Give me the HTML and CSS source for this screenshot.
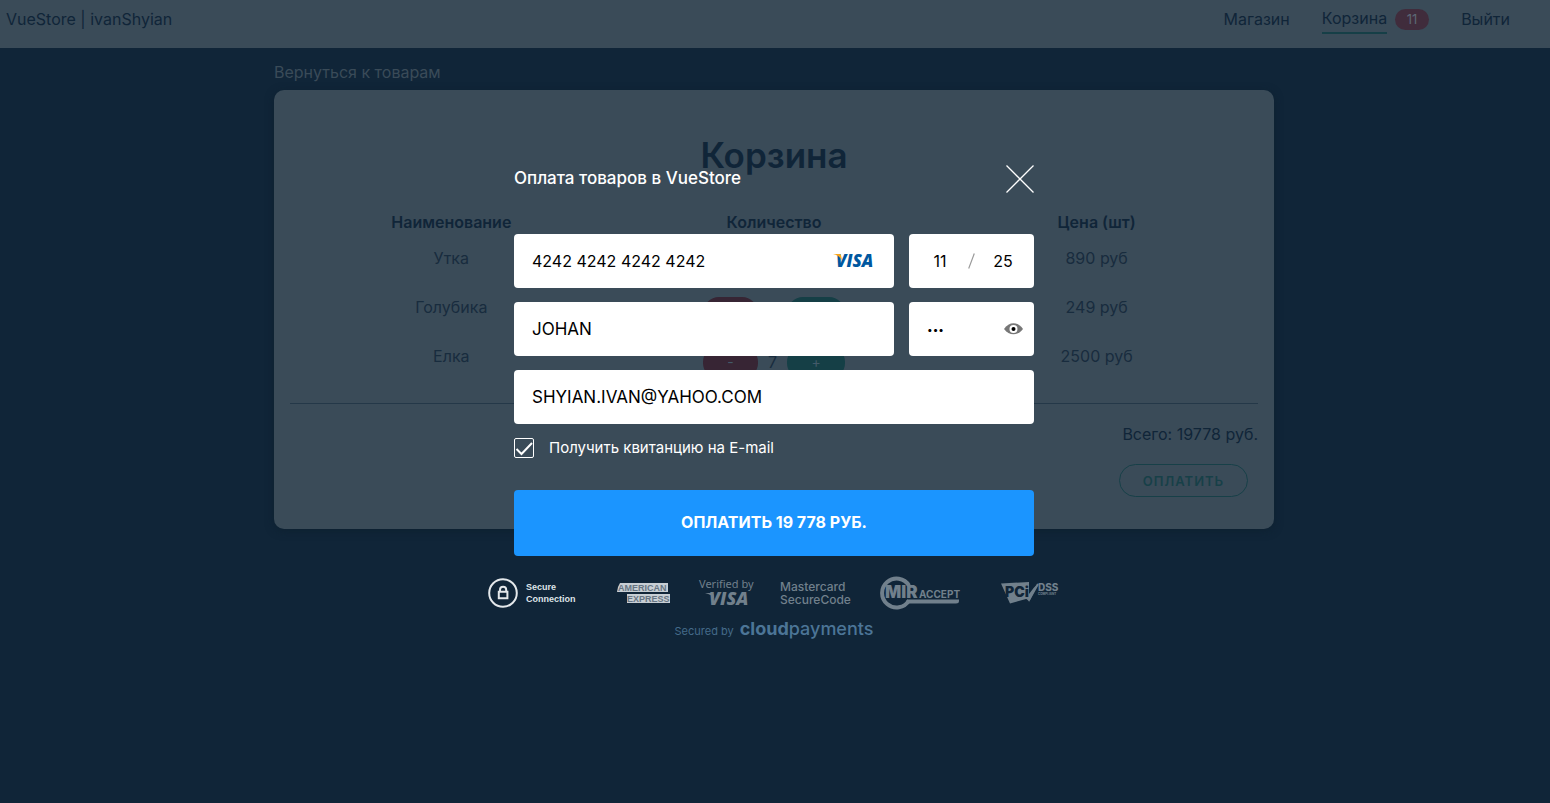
FILE: index.html
```html
<!DOCTYPE html>
<html lang="ru">
<head>
<meta charset="utf-8">
<title>VueStore</title>
<link rel="stylesheet" href="styles.css">
</head>
<body>
<header class="navbar">
  <span class="brand">VueStore | ivanShyian</span>
  <nav class="menu">
    <a href="#">Магазин</a>
    <span class="menu-cart"><a class="active" href="#">Корзина</a><span class="badge">11</span></span>
    <a href="#">Выйти</a>
  </nav>
</header>

<main class="page">
  <a class="back" href="#">Вернуться к товарам</a>
  <section class="card">
    <h1>Корзина</h1>
    <table class="cart">
      <thead><tr><th>Наименование</th><th>Количество</th><th>Цена (шт)</th></tr></thead>
      <tbody>
        <tr><td>Утка</td><td><div class="qty"><button class="minus">-</button><span>2</span><button class="plus">+</button></div></td><td>890 руб</td></tr>
        <tr><td>Голубика</td><td><div class="qty"><button class="minus">-</button><span>2</span><button class="plus">+</button></div></td><td>249 руб</td></tr>
        <tr><td>Елка</td><td><div class="qty"><button class="minus">-</button><span>7</span><button class="plus">+</button></div></td><td>2500 руб</td></tr>
      </tbody>
    </table>
    <hr>
    <p class="total">Всего: 19778 руб.</p>
    <div class="actions"><button class="checkout">ОПЛАТИТЬ</button></div>
  </section>
</main>

<div class="overlay">
  <form class="modal">
    <div class="modal-head">
      <h2>Оплата товаров в VueStore</h2>
      <button type="button" class="close" aria-label="Закрыть">
        <svg width="28" height="28" viewBox="0 0 28 28" fill="none" stroke="#fff" stroke-width="1.3"><path d="M.5.5l27 27M27.5.5l-27 27"/></svg>
      </button>
    </div>
    <div class="fields">
      <div class="field">
        <input type="text" aria-label="Номер карты" value="4242 4242 4242 4242">
        <svg width="41" height="16" viewBox="0 0 41 16" role="img" aria-label="Visa">
          <text class="visa-word visa-blue" x="3" y="14">VISA</text>
          <path d="M0 1h6.200q1.600 0 1.900 1.400L9 7.500Q6.500 2.400 0 1z" fill="#faa61a"/>
        </svg>
      </div>
      <div class="field expiry">
        <input type="text" aria-label="Месяц" value="11">
        <svg width="7" height="16" viewBox="0 0 7 16" fill="none" stroke="#999" stroke-width="1.200"><path d="M6.300.5L.7 15.500"/></svg>
        <input type="text" aria-label="Год" value="25">
      </div>
      <div class="field letters"><input type="text" aria-label="Имя держателя" value="JOHAN"></div>
      <div class="field cvv">
        <input type="password" aria-label="CVV" value="123">
        <button type="button" class="eye" aria-label="Показать код">
          <svg width="19" height="12" viewBox="0 0 19 12"><path d="M0 6C5-1.800 14-1.800 19 6 14 13 5 13 0 6z" fill="#777"/><circle cx="9.500" cy="6" r="4" fill="#fff"/><circle cx="9.500" cy="6" r="2" fill="#000"/></svg>
        </button>
      </div>
      <div class="field letters wide"><input type="text" aria-label="E-mail" value="SHYIAN.IVAN@YAHOO.COM"></div>
    </div>
    <label class="receipt">
      <span class="check"><input type="checkbox" checked><svg width="20" height="20" viewBox="0 0 20 20" fill="none" stroke="#fff" stroke-width="2"><path d="M2.500 11l5 5L18 5"/></svg></span>
      <span>Получить квитанцию на E-mail</span>
    </label>
    <button type="button" class="pay">ОПЛАТИТЬ 19 778 РУБ.</button>
  </form>

  <div class="logos">
    <div class="secure">
      <svg width="30" height="30" viewBox="0 0 30 30" fill="none" stroke="#e4e8eb" stroke-width="2"><circle cx="15" cy="15" r="13.800"/><path d="M10.800 13.800h8.600v6.400h-8.600z"/><path d="M12 13.500v-1.700a3.100 3.100 0 0 1 6.200 0v1.700"/></svg>
      <span>Secure<br>Connection</span>
    </div>
    <svg class="set-apart" width="54" height="24" viewBox="0 0 54 24" role="img" aria-label="American Express">
      <path d="M3 2h48v9H0l1-5z" fill="#c7ced4"/><path d="M10 13h43v9H10z" fill="#c7ced4"/>
      <text class="amex" x="1" y="10">AMERICAN</text><text class="amex" x="10" y="21">EXPRESS</text>
    </svg>
    <svg width="53" height="34" viewBox="0 0 53 34" role="img" aria-label="Verified by Visa">
      <text class="verified" x="0" y="12">Verified by</text>
      <text class="visa-word visa-grey" x="10" y="29">VISA</text>
      <path d="M6 17h6.500q1.600 0 2 1.500l.8 4.500Q13 18.500 6 17z" fill="#71808c"/>
    </svg>
    <span class="securecode">Mastercard<br>SecureCode</span>
    <svg width="82" height="34" viewBox="0 0 82 34" role="img" aria-label="MIR Accept">
      <path d="M29 9.500A14.500 14.500 0 1 0 29 24.500" fill="none" stroke="#71808c" stroke-width="4"/>
      <path d="M27 23.500h52v1.500q0 2.500-3 2.500H25z" fill="#71808c"/>
      <text class="mir" x="5" y="22">MIR</text>
      <text class="accept" x="39" y="22">ACCEPT</text>
    </svg>
    <svg class="set-apart" width="59" height="24" viewBox="0 0 59 24" role="img" aria-label="PCI DSS Compliant">
      <path d="M0 2.500L28 1v12q4-6 9-10.500L29 19l-4-1-16 4.500z" fill="#71808c"/>
      <path d="M23 13l5 6L37 3" fill="none" stroke="#71808c" stroke-width="2"/>
      <text class="pci" x="4" y="16">PCi</text>
      <text class="dss" x="37" y="10">DSS</text>
      <text class="compliant" x="37" y="14">COMPLIANT</text>
    </svg>
  </div>
  <p class="secured">Secured by <span><b>cloud</b>payments</span></p>
</div>
</body>
</html>
```
FILE: styles.css
```css
* { box-sizing: border-box; }
body {
  margin: 0;
  min-height: 100vh;
  background: #102538;
  color: #102538;
  font: 16px/24px Inter, "Open Sans", sans-serif;
}
a { color: inherit; text-decoration: none; }
button, input { font: inherit; }
h1, h2, p { margin: 0; }
svg { overflow: visible; }

.navbar {
  display: flex;
  justify-content: space-between;
  height: 48px;
  padding: 7px 40px 0 6px;
  background: #3a4b58;
}
.menu { display: flex; gap: 32px; }
.menu-cart { display: flex; gap: 8px; align-items: flex-start; }
.active { padding-bottom: 2px; border-bottom: 2px solid #163f47; line-height: 23px; }
.badge {
  margin-top: 2px;
  width: 34px;
  border-radius: 11px;
  background: #402c3c;
  color: #5c6875;
  font-size: 13px;
  line-height: 21px;
  text-align: center;
}

.page { width: calc(100% - 2px); padding: 12px 0; }
.back, .card { max-width: 1000px; margin: 0 auto; }
.back { color: #3a4b58; display: block; margin-bottom: 6px; }
.card {
  padding: 41px 16px 32px;
  border-radius: 10px;
  background: #3a4b58;
  box-shadow: 0 2px 8px rgba(12, 30, 44, .6);
}
h1 { font-size: 35px; line-height: 48px; font-weight: 600; text-align: center; }
.cart {
  width: 100%;
  margin-top: 31px;
  border-collapse: collapse;
  table-layout: fixed;
  text-align: center;
}
.cart th { padding: 0 0 12px; font-weight: 600; }
.cart td { height: 49px; padding: 0; vertical-align: top; color: #182c3e; }
.qty { display: flex; justify-content: center; gap: 10px; padding-top: 2px; line-height: 32px; }
.qty button {
  height: 33px;
  padding: 0 0 2px;
  border: 0;
  border-radius: 16px;
  color: #435a69;
  font-size: 14px;
}
.qty .minus { width: 55px; background: #372534; }
.qty .plus { width: 58px; background: #153f46; }
hr { margin: 10px 0 18px; border: 0; border-top: 1px solid #243848; }
.total { text-align: right; }
.actions { display: flex; justify-content: flex-end; padding: 18px 10px 0; }
.checkout {
  width: 129px;
  height: 33px;
  padding: 0;
  border: 1px solid #174048;
  border-radius: 17px;
  background: transparent;
  color: #174048;
  font-size: 13px;
  font-weight: 600;
  letter-spacing: 1px;
}

.overlay {
  position: absolute;
  top: 0;
  left: 0;
  right: 2px;
  display: flex;
  flex-direction: column;
  align-items: center;
  padding-top: 165px;
}
.modal { width: 520px; }
.modal-head { display: flex; justify-content: space-between; height: 69px; color: #fff; }
.modal-head h2 { font-size: 17px; line-height: 26px; font-weight: 500; }
.close { width: 28px; height: 28px; padding: 0; border: 0; background: none; }
.close svg, .eye svg { display: block; }
.fields { display: grid; grid-template-columns: 1fr 125px; gap: 14px 15px; }
.field {
  display: flex;
  align-items: center;
  height: 54px;
  padding: 0 20px 0 18px;
  border-radius: 4px;
  background: #fff;
}
.field input { flex: 1; min-width: 0; padding: 0; border: 0; outline: 0; background: none; color: #000; }
.field.letters input { font-size: 17px; }
.wide { grid-column: 1 / -1; }
.field.expiry { padding: 0 3px; }
.expiry input { text-align: center; }
.field.cvv { padding-right: 11px; }
.cvv input { font-size: 10px; }
.eye { padding: 0; border: 0; background: none; }
.receipt { display: flex; align-items: center; gap: 15px; margin: 14px 0 32px; height: 20px; color: #fff; font-size: 15px; }
.check { display: grid; width: 20px; height: 20px; }
.check > * { grid-area: 1 / 1; }
.check input {
  appearance: none;
  width: 20px;
  height: 20px;
  margin: 0;
  border: 1px solid #fff;
  border-radius: 2px;
}
.check svg { pointer-events: none; }
.check input:not(:checked) + svg { visibility: hidden; }
.pay {
  width: 100%;
  height: 66px;
  padding: 0 0 2px;
  border: 0;
  border-radius: 4px;
  background: #1b95ff;
  color: #fff;
  font-weight: 700;
}

.logos {
  display: flex;
  align-items: center;
  gap: 28px;
  width: 572px;
  height: 34px;
  margin-top: 20px;
  color: #71808c;
}
.logos svg { flex: none; }
.set-apart { margin-left: 11px; }
.secure {
  display: flex;
  align-items: center;
  gap: 8px;
  width: 90px;
  color: #dfe4e8;
  font: 700 9px/12px "Liberation Sans", sans-serif;
}
.visa-word { font: italic 800 18px "Open Sans", sans-serif; }
.visa-blue { font-size: 17px; fill: #00579f; }
.visa-grey { fill: #71808c; }
.amex { font: 700 9px "Liberation Sans", sans-serif; fill: #667482; }
.verified { font: 11px "Noto Sans", sans-serif; fill: #71808c; }
.securecode { width: 72px; font: 500 12px/13px Inter, sans-serif; }
.mir { font: 900 17px Inter, sans-serif; fill: #71808c; }
.accept { font: 700 10px Inter, sans-serif; fill: #71808c; }
.pci { font: 900 14px Inter, sans-serif; fill: #102538; }
.dss { font: 800 10px Inter, sans-serif; fill: #71808c; }
.compliant { font: 700 3px Inter, sans-serif; fill: #71808c; }
.secured {
  display: flex;
  align-items: baseline;
  gap: 6px;
  margin-top: 6px;
  color: #456b8a;
  font-size: 11px;
}
.secured span { color: #4c7597; font-size: 18px; line-height: 26px; font-weight: 500; }
.secured b { font-weight: 700; }
```
